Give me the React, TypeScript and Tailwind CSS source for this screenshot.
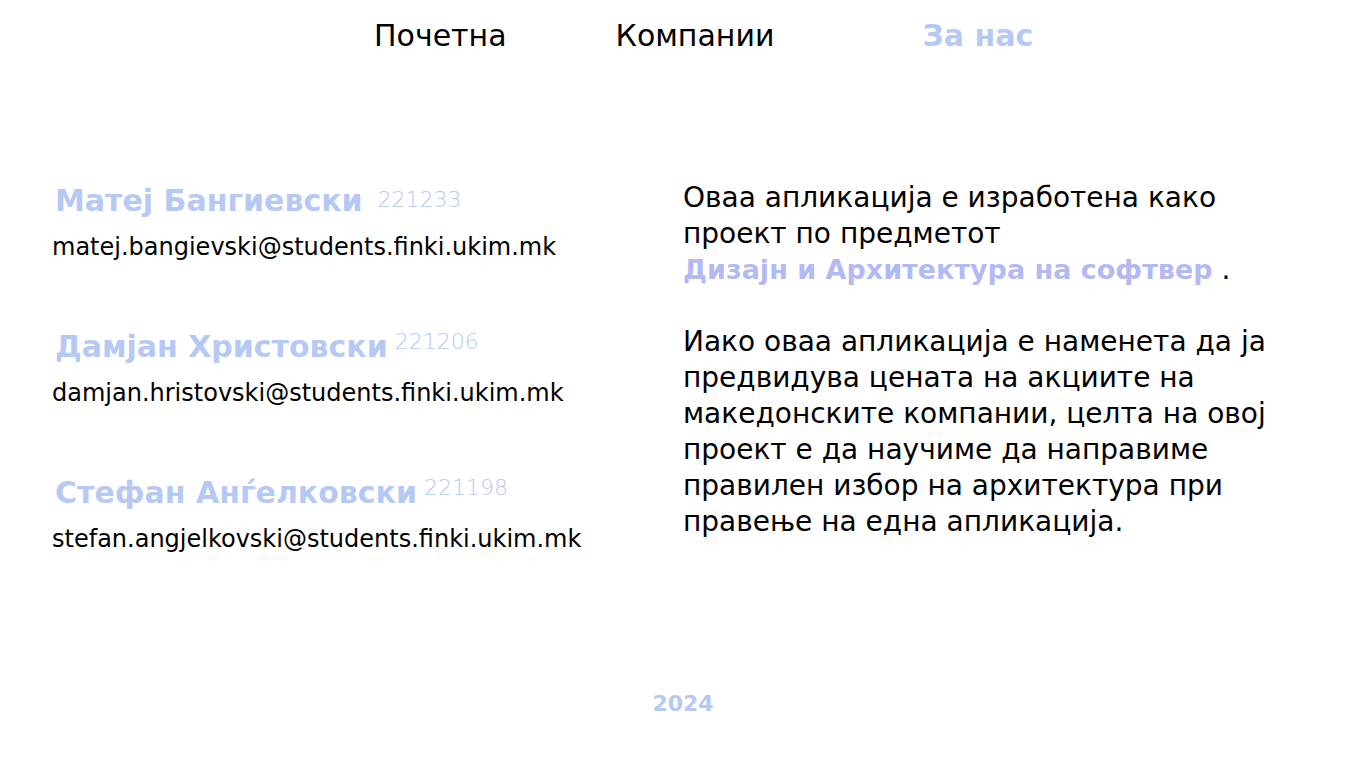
const students = [
  { name: "Матеј Бангиевски", index: "221233", email: "matej.bangievski@students.finki.ukim.mk", raised: false },
  { name: "Дамјан Христовски", index: "221206", email: "damjan.hristovski@students.finki.ukim.mk", raised: true },
  { name: "Стефан Анѓелковски", index: "221198", email: "stefan.angjelkovski@students.finki.ukim.mk", raised: true },
];

const App = () => {
  return (
    <div className="min-h-[768px] bg-white text-black font-['DejaVu_Sans',sans-serif] flex flex-col">
      {/* NAV */}
      <nav className="flex items-center pl-[374px] pt-[16px] text-[30px] leading-[40px]">
        <a>Почетна</a>
        <a className="ml-[109px]">Компании</a>
        <a className="ml-[148px] font-bold text-[#b5c9f4]">За нас</a>
      </nav>

      <main className="grid grid-cols-2 px-[52px] mt-[126px]">
        {/* STUDENTS */}
        <div className="flex flex-col gap-[65px]">
          {students.map((s) => (
            <div key={s.index}>
              <div className="flex items-start pl-[3px]">
                <span className="font-bold text-[30px] leading-[38px] text-[#b5c9f4]">{s.name}</span>
                <span
                  className={`text-[22px] leading-[28px] text-[#b5c9f4] font-light ${
                    s.raised ? "ml-[7px] mt-0" : "ml-[15px] mt-[4px]"
                  }`}
                >
                  {s.index}
                </span>
              </div>
              <p className="mt-[11px] text-[24px] leading-[32px]">{s.email}</p>
            </div>
          ))}
        </div>

        {/* ABOUT */}
        <div className="text-[28px] leading-[36px] -mt-[2px] max-w-[600px]">
          <p>
            Оваа апликација е изработена како проект по предметот
            <br />
            <span className="font-bold text-[27px] text-[#b3b9f2]">Дизајн и Архитектура на софтвер</span> .
          </p>
          <p className="mt-[36px]">
            Иако оваа апликација е наменета да ја предвидува цената на акциите на македонските компании, целта на овој
            проект е да научиме да направиме правилен избор на архитектура при правење на една апликација.
          </p>
        </div>
      </main>

      <footer className="mt-auto pb-[48px] text-center font-bold text-[22px] text-[#b5c9f4]">2024</footer>
    </div>
  );
};

export default App;
